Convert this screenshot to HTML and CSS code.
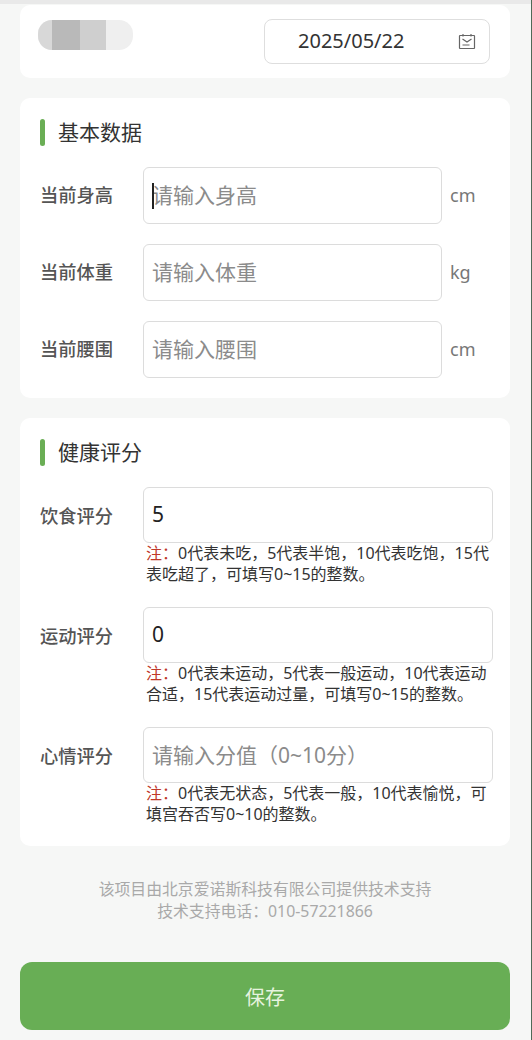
FILE: index.html
```html
<!DOCTYPE html>
<html lang="zh">
<head>
<meta charset="utf-8">
<title>健康数据</title>
<link rel="stylesheet" href="styles.css">
</head>
<body>
<div class="page">
  <section class="card head-card">
    <div class="blur-pill"><i class="b1"></i><i class="b2"></i><i class="b3"></i></div>
    <div class="date-box">
      <span class="date-text">2025/05/22</span>
      <svg class="cal" viewBox="0 0 18 18" width="18" height="18" fill="none" stroke="#666" stroke-width="1.2">
        <rect x="1.5" y="2.5" width="15" height="13" rx="0.5"/>
        <path d="M5 1v2.5M13 1v2.5M4.5 6l4.5 3 4.5-3M4.5 12h7"/>
      </svg>
    </div>
  </section>

  <section class="card basic-card">
    <h2 class="title">基本数据</h2>
    <div class="row">
      <div class="label">当前身高</div>
      <div class="input placeholder"><span class="caret"></span>请输入身高</div>
      <div class="unit">cm</div>
    </div>
    <div class="row">
      <div class="label">当前体重</div>
      <div class="input placeholder">请输入体重</div>
      <div class="unit">kg</div>
    </div>
    <div class="row">
      <div class="label">当前腰围</div>
      <div class="input placeholder">请输入腰围</div>
      <div class="unit">cm</div>
    </div>
  </section>

  <section class="card score-card">
    <h2 class="title">健康评分</h2>
    <div class="score">
      <div class="label">饮食评分</div>
      <div class="score-body">
        <div class="input">5</div>
        <p class="note"><span class="mark">注：</span>0代表未吃，5代表半饱，10代表吃饱，15代表吃超了，可填写0~15的整数。</p>
      </div>
    </div>
    <div class="score">
      <div class="label">运动评分</div>
      <div class="score-body">
        <div class="input">0</div>
        <p class="note"><span class="mark">注：</span>0代表未运动，5代表一般运动，10代表运动合适，15代表运动过量，可填写0~15的整数。</p>
      </div>
    </div>
    <div class="score">
      <div class="label">心情评分</div>
      <div class="score-body">
        <div class="input placeholder">请输入分值（0~10分）</div>
        <p class="note"><span class="mark">注：</span>0代表无状态，5代表一般，10代表愉悦，可填宫吞否写0~10的整数。</p>
      </div>
    </div>
  </section>

  <footer class="support">
    <div>该项目由北京爱诺斯科技有限公司提供技术支持</div>
    <div>技术支持电话：010-57221866</div>
  </footer>

  <button class="save">保存</button>
</div>
</body>
</html>
```
FILE: styles.css
```css
* { box-sizing: border-box; }
html, body { margin: 0; padding: 0; }
body {
  width: 532px;
  height: 1040px;
  overflow: hidden;
  background: #f6f7f6;
  color: #333;
  font-family: "Noto Sans CJK SC", "Noto Sans", sans-serif;
}
.page {
  height: 1040px;
  padding: 5px 21px 0 20px;
  border-right: 1px solid #4f6a58;
  background: linear-gradient(#e9e9e9 0 4px, transparent 4px);
}
.card {
  background: #fff;
  border-radius: 10px;
  margin-bottom: 20px;
}
.head-card {
  height: 73px;
  padding: 14px 20px 0 18px;
  display: flex;
  justify-content: space-between;
  align-items: flex-start;
}
.blur-pill {
  width: 95px;
  height: 30px;
  margin-top: 1px;
  border-radius: 14px;
  background: #efefef;
  display: flex;
  overflow: hidden;
}
.blur-pill i { display: block; height: 30px; }
.b1 { width: 14px; background: #d8d8d8; }
.b2 { width: 28px; background: #b9b9b9; }
.b3 { width: 26px; background: #cfcfcf; }
.date-box {
  width: 226px;
  height: 45px;
  border: 1px solid #dedede;
  border-radius: 8px;
  display: flex;
  align-items: center;
  padding: 0 13px 2px 33px;
  justify-content: space-between;
}
.date-text {
  font-family: "Noto Sans", sans-serif;
  font-size: 20px;
  color: #333;
}
.cal { display: block; margin-top: 2px; }
.basic-card { height: 300px; padding: 20px 20px 0; }
.score-card { height: 428px; padding: 20px 17px 0 20px; }
.title {
  margin: 0 0 21px;
  height: 28px;
  line-height: 27px;
  font-size: 21px;
  font-weight: 400;
  color: #333;
  padding-left: 18px;
  position: relative;
}
.title::before {
  content: "";
  position: absolute;
  left: 0;
  top: 1px;
  width: 5px;
  height: 27px;
  border-radius: 3px;
  background: #6aae55;
}
.row {
  display: flex;
  align-items: center;
  height: 56.5px;
  margin-top: 20.5px;
}
.title + .row { margin-top: 0; }
.label {
  width: 103px;
  flex: none;
  font-size: 18.25px;
  font-weight: 500;
  color: #555;
  padding-bottom: 2px;
}
.input {
  height: 56.5px;
  border: 1px solid #dcdcdc;
  border-radius: 6px;
  background: #fff;
  display: flex;
  align-items: center;
  padding: 0 0 3px 8px;
  font-family: "Noto Sans", "Noto Sans CJK SC", sans-serif;
  font-size: 21px;
  color: #222;
  position: relative;
}
.row .input { width: 299px; flex: none; }
.placeholder { color: #8b8b8b; }
.caret {
  position: absolute;
  left: 8px;
  top: 15px;
  width: 1.5px;
  height: 26px;
  background: #222;
}
.unit {
  margin-left: 8px;
  font-family: "Noto Sans", sans-serif;
  font-size: 18px;
  color: #777;
  padding-bottom: 1px;
}
.score {
  display: flex;
  align-items: flex-start;
  height: 120px;
}
.score .label { line-height: 56px; }
.score .input { height: 56px; }
.score-body { flex: 1; }
.note {
  margin: 0;
  padding: 0 0 0 3px;
  font-family: "Noto Sans", "Noto Sans CJK SC", sans-serif;
  font-size: 16px;
  line-height: 20.5px;
  color: #333;
}
.mark { color: #c0392b; }
.support {
  text-align: center;
  font-family: "Noto Sans", "Noto Sans CJK SC", sans-serif;
  font-size: 15.85px;
  line-height: 22px;
  color: #a9a9a9;
  padding-top: 12px;
  height: 96px;
}
.save {
  display: block;
  width: 490px;
  height: 68px;
  border: 0;
  border-radius: 12px;
  background: #68ae55;
  color: #e6f3df;
  font-family: "Noto Sans CJK SC", sans-serif;
  font-size: 20px;
  padding: 0;
}
```
